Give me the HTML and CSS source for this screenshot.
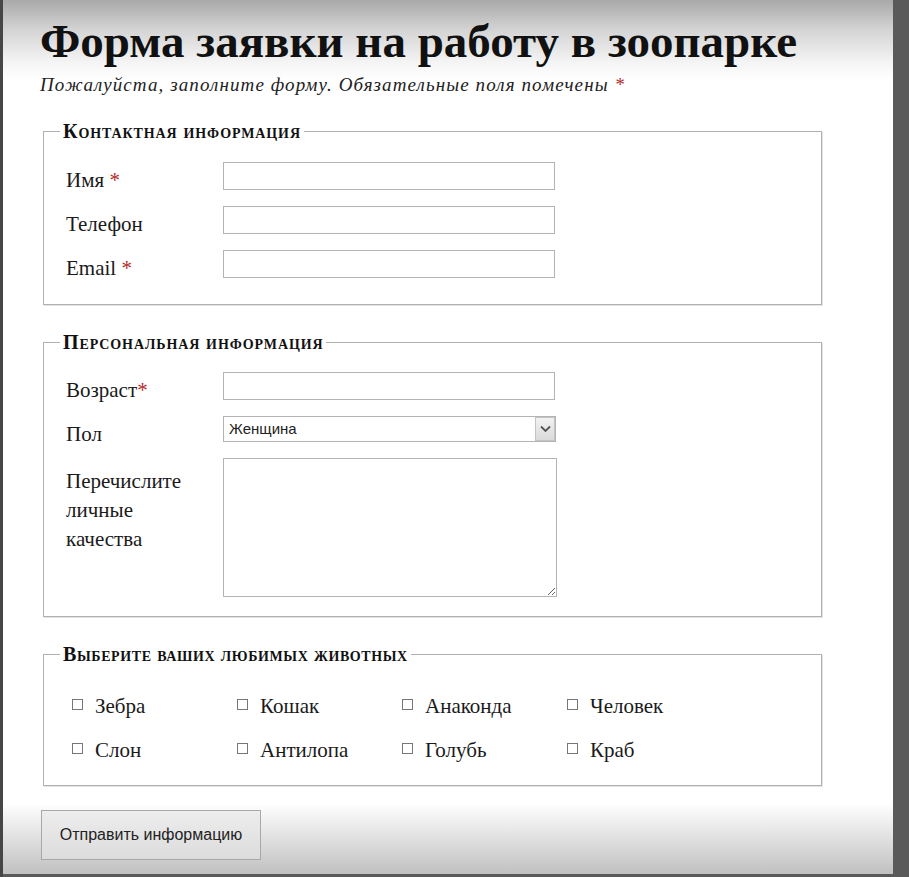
FILE: index.html
```html
<!DOCTYPE html>
<html lang="ru">
<head>
<meta charset="utf-8">
<title>Форма заявки на работу в зоопарке</title>
<link rel="stylesheet" href="styles.css">
</head>
<body>
<div class="page">
  <h1 class="title">Форма заявки на работу в зоопарке</h1>
  <p class="intro">Пожалуйста, заполните форму. Обязательные поля помечены <span class="req">*</span></p>
  <form class="form">
    <fieldset class="group">
      <legend class="legend">Контактная информация</legend>
      <div class="rows">
        <label class="label">Имя <span class="req">*</span></label>
        <input class="field" type="text">
        <label class="label">Телефон</label>
        <input class="field" type="text">
        <label class="label">Email <span class="req">*</span></label>
        <input class="field" type="text">
      </div>
    </fieldset>
    <fieldset class="group personal">
      <legend class="legend">Персональная информация</legend>
      <div class="rows">
        <label class="label">Возраст<span class="req">*</span></label>
        <input class="field" type="text">
        <label class="label">Пол</label>
        <div class="select-wrap">
          <select class="select"><option>Женщина</option><option>Мужчина</option></select>
          <span class="select-btn"><svg width="11" height="8" viewBox="0 0 11 8"><path d="M1 1.5 L5.5 6 L10 1.5" fill="none" stroke="#555" stroke-width="1.8"/></svg></span>
        </div>
        <label class="label multi">Перечислите личные качества</label>
        <textarea class="area"></textarea>
      </div>
    </fieldset>
    <fieldset class="group animals">
      <legend class="legend">Выберите ваших любимых животных</legend>
      <div class="checks">
        <label class="check"><input type="checkbox" class="box"> Зебра</label>
        <label class="check"><input type="checkbox" class="box"> Кошак</label>
        <label class="check"><input type="checkbox" class="box"> Анаконда</label>
        <label class="check"><input type="checkbox" class="box"> Человек</label>
        <label class="check"><input type="checkbox" class="box"> Слон</label>
        <label class="check"><input type="checkbox" class="box"> Антилопа</label>
        <label class="check"><input type="checkbox" class="box"> Голубь</label>
        <label class="check"><input type="checkbox" class="box"> Краб</label>
      </div>
    </fieldset>
    <button type="button" class="submit">Отправить информацию</button>
  </form>
</div>
</body>
</html>
```
FILE: styles.css
```css
html, body {
  margin: 0;
  padding: 0;
}
body {
  background: #5a5a5a;
  height: 877px;
  overflow: hidden;
  border-left: 3px solid #464646;
}
.page {
  width: 890px;
  height: 874px;
  box-sizing: border-box;
  padding: 16px 0 0 37px;
  background: linear-gradient(to bottom, #a9a9a9 0, #d4d4d4 30px, #f4f4f4 62px, #fff 80px, #fff 803px, #e6e6e6 832px, #c2c2c2 872px);
  font-family: "Liberation Serif", "DejaVu Serif", serif;
  color: #1a1a1a;
}
.title {
  margin: 0;
  font-size: 47px;
  font-weight: bold;
  line-height: 50px;
  color: #111;
}
.intro {
  margin: 7px 0 0 0;
  font-style: italic;
  font-size: 19px;
  line-height: 24px;
  letter-spacing: 1.1px;
  color: #222;
}
.req {
  color: #b52a2a;
}
.form {
  margin-top: 22px;
}
.group {
  margin: 0 0 0 3px;
  width: 779px;
  box-sizing: border-box;
  border: 1px solid #b0b0b0;
  box-shadow: 1px 1px 0 #e4e4e4;
  padding: 19px 0 26px 22px;
}
.group + .group {
  margin-top: 25px;
}
.personal {
  padding-top: 18px;
  padding-bottom: 19px;
}
.legend {
  font-variant: small-caps;
  font-weight: bold;
  font-size: 20px;
  line-height: 24px;
  letter-spacing: 0.9px;
  padding: 0 3px;
  margin-left: -6px;
  color: #111;
}
.rows {
  display: grid;
  grid-template-columns: 157px 334px;
  row-gap: 16px;
  align-items: start;
}
.label {
  font-size: 21px;
  line-height: 15px;
  padding-top: 11px;
  height: 26px;
  box-sizing: border-box;
}
.field {
  box-sizing: border-box;
  width: 332px;
  height: 28px;
  border: 1px solid #b4b4b4;
  background: #fff;
  margin: 0;
  display: block;
}
.select-wrap {
  position: relative;
  width: 333px;
  height: 26px;
}
.select {
  appearance: none;
  -webkit-appearance: none;
  box-sizing: border-box;
  width: 333px;
  height: 26px;
  border: 1px solid #b4b4b4;
  background: #fff;
  font-family: "Liberation Sans", Arial, sans-serif;
  font-size: 15px;
  color: #222;
  padding: 0 0 2px 5px;
  margin: 0;
  border-radius: 0;
  display: block;
}
.select-btn {
  position: absolute;
  right: 1px;
  top: 1px;
  width: 18px;
  height: 22px;
  background: linear-gradient(#f2f2f2, #dadada);
  border: 1px solid #c4c4c4;
  display: flex;
  align-items: center;
  justify-content: center;
}
.area {
  box-sizing: border-box;
  width: 334px;
  height: 139px;
  border: 1px solid #b4b4b4;
  margin: 0;
  resize: both;
  display: block;
}
.label.multi {
  width: 130px;
  height: auto;
  line-height: 29px;
  padding-top: 9px;
}
.animals {
  padding: 25px 0 20px 28px;
}
.animals .legend {
  margin-left: -12px;
  letter-spacing: 0.6px;
}
.checks {
  display: grid;
  grid-template-columns: repeat(4, 165px);
  row-gap: 14px;
}
.check {
  font-size: 21px;
  line-height: 30px;
  display: flex;
  align-items: flex-start;
  gap: 12px;
}
.box {
  appearance: none;
  -webkit-appearance: none;
  width: 11px;
  height: 11px;
  margin: 8px 0 0 0;
  border: 1px solid #777;
  background: #fff;
  box-sizing: border-box;
}
.submit {
  margin-top: 24px;
  margin-left: 1px;
  width: 220px;
  height: 50px;
  border: 1px solid #a8a8a8;
  background: linear-gradient(#ededed, #dcdcdc);
  font-family: "Liberation Sans", Arial, sans-serif;
  font-size: 16px;
  color: #222;
  border-radius: 0;
}
```
